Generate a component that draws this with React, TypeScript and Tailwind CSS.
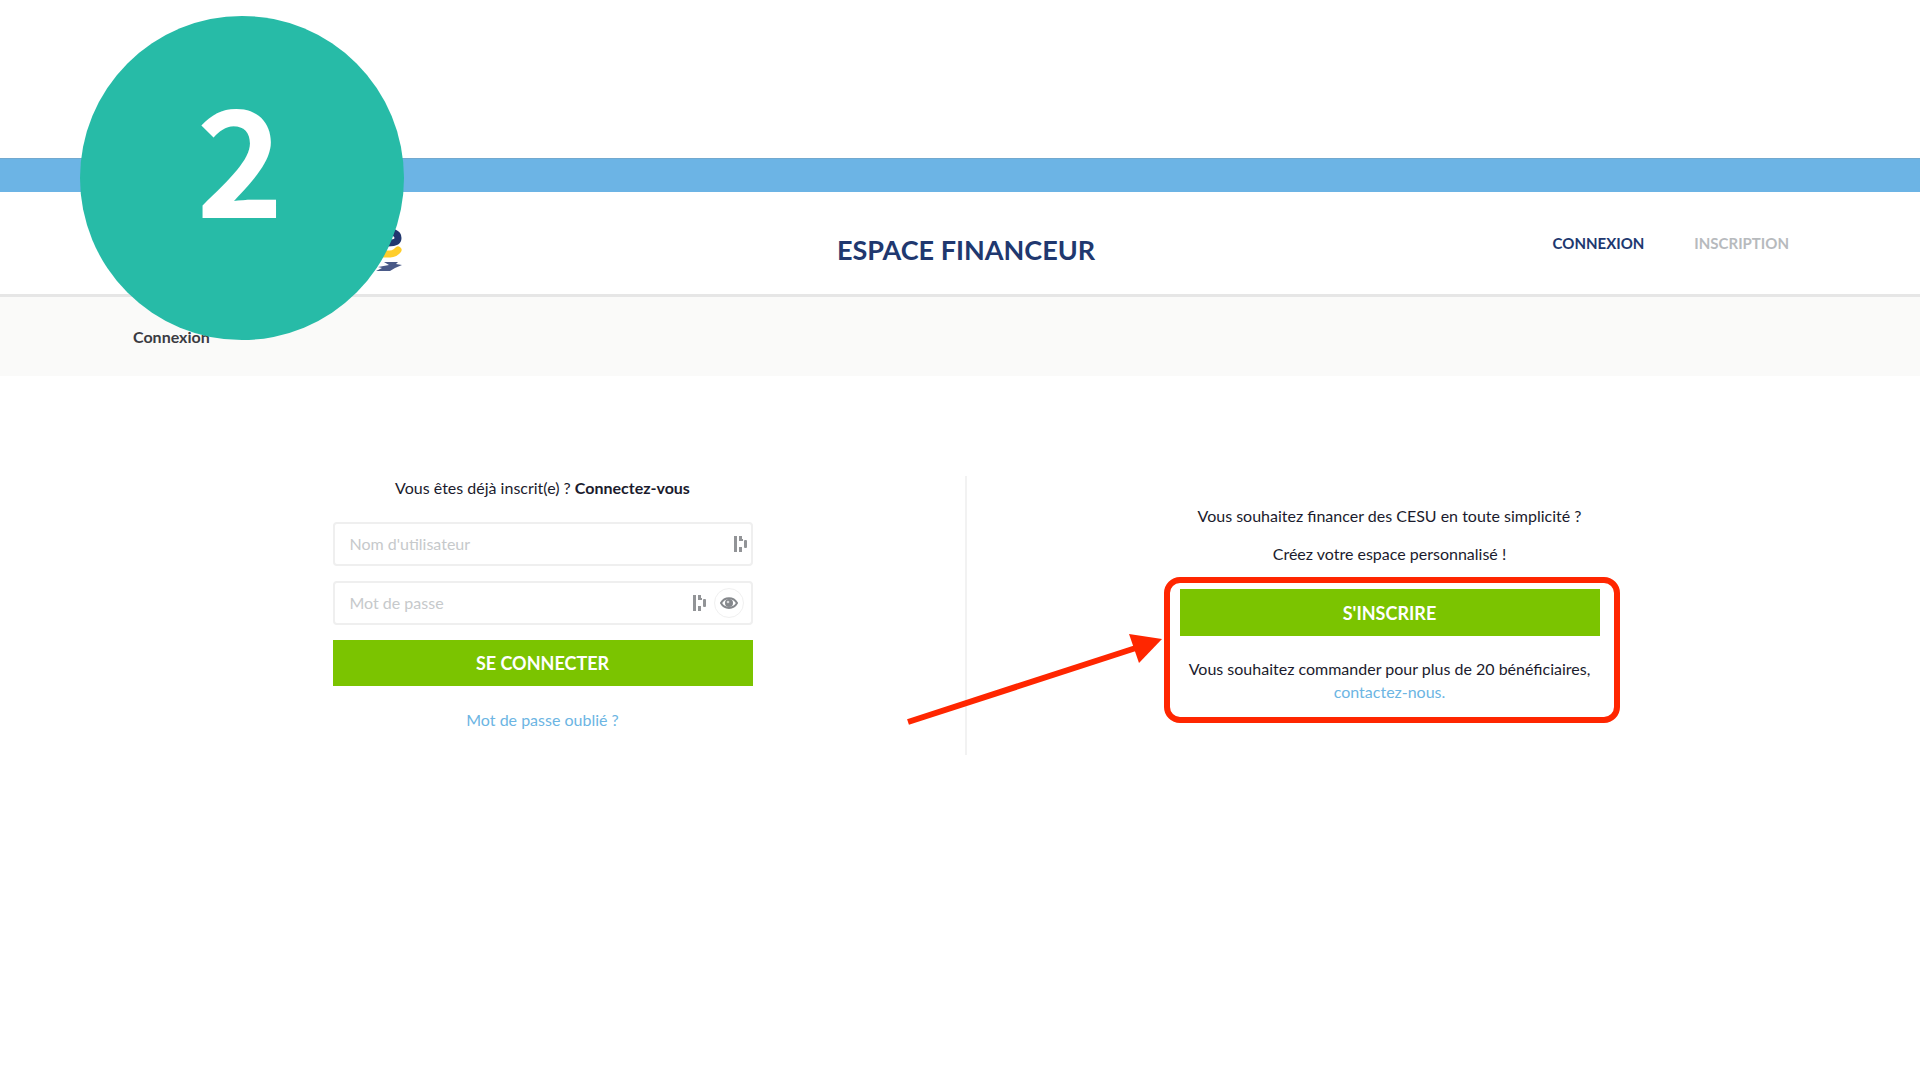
import type { ReactNode } from "react";

function Logo() {
  return (
    <svg className="ml-[197px] h-[50px] w-[62px]" viewBox="0 0 62 50" fill="none" aria-hidden="true">
      <path d="M44 6 C52 5 58 7 58 12 C58 16 54 17 48 17 H30" stroke="#22386f" strokeWidth="7" />
      <path d="M58 24 C54 29 50 28 40 28 H28" stroke="#ffce2b" strokeWidth="7" strokeLinecap="round" />
      <path d="M44 36 H58 L56 38 L62 39 L55 42 L50 45 L36 45 L42 42 L38 41 L49 39 Z" fill="#4a5a88" />
    </svg>
  );
}

function PasswordManagerIcon() {
  return (
    <svg className="h-[18px] w-[13px]" viewBox="0 0 13 18" fill="#929497" aria-hidden="true">
      <rect x="0" y="1" width="3" height="16" />
      <rect x="5" y="1" width="3" height="5" />
      <rect x="5" y="12" width="3" height="5" />
      <rect x="7" y="4" width="2" height="2" />
      <rect x="10" y="5" width="3" height="8" rx="1" />
    </svg>
  );
}

function EyeIcon() {
  return (
    <svg className="h-[14px] w-[18px]" viewBox="0 0 18 14" aria-hidden="true">
      <path d="M1 7 C4.5 0.5 13.5 0.5 17 7 C13.5 13.5 4.5 13.5 1 7 Z" fill="#fff" stroke="#85888c" strokeWidth="2" />
      <circle cx="9" cy="7" r="4" fill="#85888c" />
      <circle cx="8" cy="6" r="1.3" fill="#d5d6d8" />
    </svg>
  );
}

type FieldProps = {
  id: string;
  type: string;
  label: string;
  children: ReactNode;
};

function Field({ id, type, label, children }: FieldProps) {
  return (
    <div className="flex h-[44px] items-center rounded border-2 border-[#efefef] bg-white pl-[15px]">
      <input
        id={id}
        type={type}
        placeholder={label}
        aria-label={label}
        className="min-w-0 flex-1 bg-transparent text-base text-[#13132b] outline-none placeholder:text-[#c6c9cb]"
      />
      {children}
    </div>
  );
}

function LoginForm() {
  return (
    <form className="flex w-[420px] flex-col text-center" onSubmit={(e) => e.preventDefault()}>
      <p className="text-base leading-6 text-[#1b1b2d]">
        Vous êtes déjà inscrit(e) ? <strong className="font-bold">Connectez-vous</strong>
      </p>
      <div className="mt-[22px] flex flex-col gap-[15px]">
        <Field id="username" type="text" label="Nom d'utilisateur">
          <span className="mr-1">
            <PasswordManagerIcon />
          </span>
        </Field>
        <Field id="password" type="password" label="Mot de passe">
          <PasswordManagerIcon />
          <button
            type="button"
            aria-label="Afficher le mot de passe"
            className="mr-[7px] ml-2 flex h-[30px] w-[30px] items-center justify-center rounded-full border border-[#f0f0f0]"
          >
            <EyeIcon />
          </button>
        </Field>
        <button type="submit" className="h-[46px] bg-[#7bc400] text-lg font-bold text-white">
          SE CONNECTER
        </button>
      </div>
      <a href="#mot-de-passe" className="mt-[22px] self-center text-base leading-6 text-[#6cb5e3]">
        Mot de passe oublié ?
      </a>
    </form>
  );
}

function Arrow() {
  return (
    <svg className="absolute top-[51px] right-full h-[94px] w-[264px]" viewBox="0 0 264 94" aria-hidden="true">
      <path d="M2 88 L236 12" stroke="#ff2600" strokeWidth="6" />
      <path d="M223 0 L256 5 L233 29 Z" fill="#ff2600" />
    </svg>
  );
}

function SignUp() {
  return (
    <div className="flex flex-col items-center text-center text-base text-[#1b1b2d]">
      <p className="leading-6">Vous souhaitez financer des CESU en toute simplicité ?</p>
      <p className="mt-[14px] leading-6">Créez votre espace personnalisé !</p>
      <div className="relative mt-[11px] ml-1 flex w-[456px] flex-col rounded-2xl border-[6px] border-[#ff2600] pt-[6px] pr-[14px] pb-[14px] pl-[10px]">
        <button type="button" className="h-[47px] bg-[#7bc400] text-lg font-bold text-white">
          S'INSCRIRE
        </button>
        <p className="mt-[21px] leading-[23px]">
          Vous souhaitez commander pour plus de 20 bénéficiaires,
          <br />
          <a href="#contact" className="text-[#6cb5e3]">
            contactez-nous.
          </a>
        </p>
        <Arrow />
      </div>
    </div>
  );
}

export default function App() {
  return (
    <div className="relative min-h-screen bg-white pt-[158px] font-['Lato','Liberation_Sans',sans-serif]">
      <div className="h-[34px] border-t border-[#72a9cf] bg-[#6cb4e5]" />

      <header className="flex h-[105px] items-center border-b-[3px] border-[#e6e6e6] pr-[131px] pl-[143px]">
        <div className="flex-1 pt-4">
          <Logo />
        </div>
        <h1 className="pt-[14px] text-[27px] leading-8 font-bold text-[#20386f]">ESPACE FINANCEUR</h1>
        <nav className="flex flex-1 justify-end gap-[50px] text-[15px] leading-6 font-bold">
          <a href="#connexion" className="text-[#20386f]">
            CONNEXION
          </a>
          <a href="#inscription" className="text-[#b7babd]">
            INSCRIPTION
          </a>
        </nav>
      </header>

      <div className="flex h-[79px] items-center bg-[#fafaf9] pl-[133px]">
        <span className="text-base leading-6 font-bold text-[#3a3b42]">Connexion</span>
      </div>

      <main className="mt-[100px] flex pr-[120px] pl-[132px]">
        <section className="flex flex-1 justify-center border-r-2 border-[#f2f2f2] pr-[12px] pb-[23px]">
          <LoginForm />
        </section>
        <section className="flex flex-1 justify-center pt-[28px] pl-[12px]">
          <SignUp />
        </section>
      </main>

      {/* step badge */}
      <div className="absolute top-4 left-20 flex h-[324px] w-[324px] items-center justify-center rounded-full bg-[#27bba7] pr-1 pb-12 font-['Noto_Sans_CJK_SC','Open_Sans',sans-serif] text-[148px] leading-none font-bold text-white">
        2
      </div>
    </div>
  );
}
